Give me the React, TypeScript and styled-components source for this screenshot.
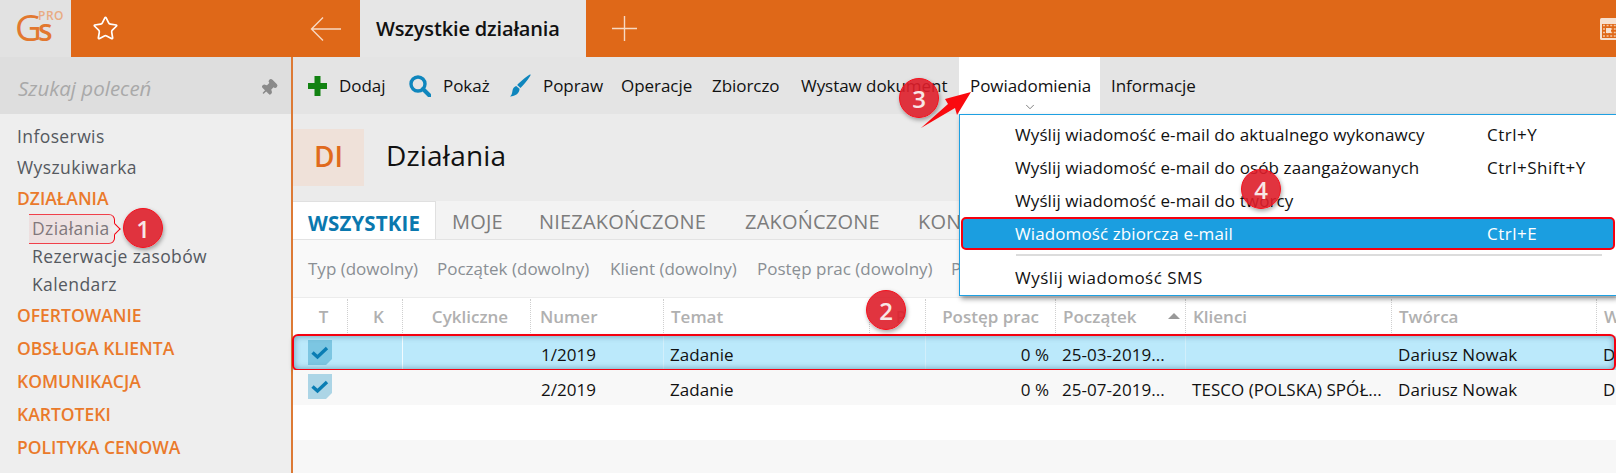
import React from "react"
import styled, { createGlobalStyle } from "styled-components"
import { Star, Pin, ChevronDown } from "lucide-react"

const GlobalStyle = createGlobalStyle`
  html, body {
    margin: 0;
    padding: 0;
    background: #fff;
    font-family: "Open Sans", "Noto Sans", sans-serif;
  }
  * { box-sizing: border-box; }
`

const columns = "54px 55px 128px 133px 206px 56px 130px 130px 206px 205px 1fr"
const orange = "#df6818"
const alertRed = "#f5000f"

const sideGroups = ["OFERTOWANIE", "OBSŁUGA KLIENTA", "KOMUNIKACJA", "KARTOTEKI", "POLITYKA CENOWA"]
const tabs = [
  { label: "MOJE", w: 87 },
  { label: "NIEZAKOŃCZONE", w: 206 },
  { label: "ZAKOŃCZONE", w: 173 },
  { label: "KONTYNUOWANE", w: 200 },
]
const filters = [
  { label: "Typ (dowolny)", w: 129 },
  { label: "Początek (dowolny)", w: 173 },
  { label: "Klient (dowolny)", w: 147 },
  { label: "Postęp prac (dowolny)", w: 194 },
  { label: "Priorytet (dowolny)", w: 170 },
]
const menu = [
  { label: "Wyślij wiadomość e-mail do aktualnego wykonawcy", keys: "Ctrl+Y" },
  { label: "Wyślij wiadomość e-mail do osób zaangażowanych", keys: "Ctrl+Shift+Y" },
  { label: "Wyślij wiadomość e-mail do twórcy", keys: "" },
]
const rows = [
  { num: "1/2019", date: "25-03-2019...", client: "", active: true },
  { num: "2/2019", date: "25-07-2019...", client: "TESCO (POLSKA) SPÓŁ...", active: false },
]

const CheckIcon = ({ fill }: { fill: string }) => (
  <svg width="24" height="25" viewBox="0 0 24 25">
    <path d="M0 0H24V19L18 25H0Z" fill={fill} />
    <path d="M4.5 12.5L9.5 17L19 8" fill="none" stroke="#0a7db3" strokeWidth="3.4" />
  </svg>
)

const App = () => (
  <Page>
    <GlobalStyle />
    <TopBar>
      <Logo>
        <LogoG>G</LogoG>
        <LogoS>s</LogoS>
        <LogoPro>PRO</LogoPro>
      </Logo>
      <StarSlot>
        <Star size={27} strokeWidth={1.5} color="#fff" />
      </StarSlot>
      <BackSlot>
        <svg width="32" height="26" viewBox="0 0 32 26" fill="none" stroke="#f7d9c3" strokeWidth="1.4">
          <path d="M31 13H1.5M13 1.5L1.5 13L13 24.5" />
        </svg>
      </BackSlot>
      <ActiveTab>Wszystkie działania</ActiveTab>
      <AddSlot>
        <svg width="25" height="25" viewBox="0 0 25 25" stroke="#f7d9c3" strokeWidth="1.4">
          <path d="M0 12.5H25M12.5 0V25" />
        </svg>
      </AddSlot>
      <CalendarSlot>
        <svg width="17" height="22" viewBox="0 0 17 22">
          <rect width="17" height="22" rx="1.5" fill="#f6e0cf" />
          <rect x="2" y="6" width="15" height="14" fill={orange} />
          <path d="M3 7.5H17M3 11H17M3 14.5H17M3 18H17" stroke="#f6c7a4" strokeWidth="1.6" strokeDasharray="2 1.6" />
          <rect x="6" y="10" width="5" height="5" fill="#f6e0cf" />
        </svg>
      </CalendarSlot>
    </TopBar>
    <Body>
      <Sidebar>
        <SearchBox>
          <SearchHint>Szukaj poleceń</SearchHint>
          <PinIcon>
            <Pin size={18} fill="#8a8a8a" color="#8a8a8a" />
          </PinIcon>
        </SearchBox>
        <SideList>
          <SideLink $h={32}>Infoserwis</SideLink>
          <SideLink $h={31}>Wyszukiwarka</SideLink>
          <SideGroup $h={31}>DZIAŁANIA</SideGroup>
          <SideLink $h={29} $sub>
            Działania
          </SideLink>
          <SideLink $h={26} $sub>
            Rezerwacje zasobów
          </SideLink>
          <SideLink $h={30} $sub>
            Kalendarz
          </SideLink>
          {sideGroups.map(group => (
            <SideGroup key={group} $h={33}>
              {group}
            </SideGroup>
          ))}
        </SideList>
      </Sidebar>
      <Main>
        <Toolbar>
          <ToolItem $w={101}>
            <svg width="19" height="20" viewBox="0 0 19 20" fill="#128212">
              <path d="M6.5 0H12.5V7H19V13H12.5V20H6.5V13H0V7H6.5Z" />
            </svg>
            <span>Dodaj</span>
          </ToolItem>
          <ToolItem $w={101}>
            <svg width="22" height="22" viewBox="0 0 22 22" fill="none" stroke="#0f86bd">
              <circle cx="9" cy="9" r="7" strokeWidth="3.4" />
              <path d="M14 14L20.5 20.5" strokeWidth="4" strokeLinecap="round" />
            </svg>
            <span>Pokaż</span>
          </ToolItem>
          <ToolItem $w={111}>
            <svg width="21" height="23" viewBox="0 0 22 24" fill="#0f86bd">
              <path d="M21.5 0.5C22.5 1.5 15 11 11 14.5L7.5 11.5C11 7.5 20.5 -0.5 21.5 0.5Z" />
              <path d="M6.5 12.5L10 15.5C10 20 6 23.5 0 23.5C2.5 22 2 19 3 16C3.7 14 5 13 6.5 12.5Z" />
            </svg>
            <span>Popraw</span>
          </ToolItem>
          <ToolItem $w={91}>Operacje</ToolItem>
          <ToolItem $w={89}>Zbiorczo</ToolItem>
          <ToolItem $w={158}>Wystaw dokument</ToolItem>
          <ToolItem $w={141} $open>
            Powiadomienia
            <Caret>
              <ChevronDown size={14} strokeWidth={1.4} color="#666" />
            </Caret>
            <Menu>
              {menu.map(item => (
                <MenuRow key={item.label}>
                  <span>{item.label}</span>
                  <span>{item.keys}</span>
                </MenuRow>
              ))}
              <MenuRow $active>
                <span>Wiadomość zbiorcza e-mail</span>
                <span>Ctrl+E</span>
              </MenuRow>
              <MenuRule />
              <MenuRow $h={38}>
                <span>Wyślij wiadomość SMS</span>
              </MenuRow>
            </Menu>
          </ToolItem>
          <ToolItem $w={116} $pad={11}>
            Informacje
          </ToolItem>
        </Toolbar>
        <TitleRow>
          <TitleBadge>DI</TitleBadge>
          <Title>Działania</Title>
        </TitleRow>
        <Tabs>
          <TabActive>WSZYSTKIE</TabActive>
          {tabs.map(tab => (
            <Tab key={tab.label} $w={tab.w}>
              {tab.label}
            </Tab>
          ))}
        </Tabs>
        <Filters>
          {filters.map(filter => (
            <Filter key={filter.label} $w={filter.w}>
              {filter.label}
            </Filter>
          ))}
        </Filters>
        <HeadRow>
          <HeadCell $center>T</HeadCell>
          <HeadCell $center>K</HeadCell>
          <HeadCell $center>Cykliczne</HeadCell>
          <HeadCell>Numer</HeadCell>
          <HeadCell>Temat</HeadCell>
          <HeadCell $center>P</HeadCell>
          <HeadCell $end>Postęp prac</HeadCell>
          <HeadCell>
            Początek
            <SortMark />
          </HeadCell>
          <HeadCell>Klienci</HeadCell>
          <HeadCell>Twórca</HeadCell>
          <HeadCell>W</HeadCell>
        </HeadRow>
        {rows.map(row => {
          const line = row.active ? "#d2effb" : "transparent"
          return (
            <DataRow key={row.num} $active={row.active}>
              <CheckCell>
                <CheckIcon fill={row.active ? "#7cc6e2" : "#acd5e6"} />
              </CheckCell>
              <Cell />
              <Cell $line={row.active ? "#f2fbff" : "transparent"} />
              <Cell>{row.num}</Cell>
              <Cell $line={line}>Zadanie</Cell>
              <Cell />
              <Cell $line={line} $right>
                0 %
              </Cell>
              <Cell>{row.date}</Cell>
              <Cell $line={line}>{row.client}</Cell>
              <Cell>Dariusz Nowak</Cell>
              <Cell>D</Cell>
            </DataRow>
          )
        })}
        <EmptyRow />
        <TableFoot />
      </Main>
    </Body>

    <Callout />
    <Badge $x={143} $y={228}>1</Badge>
    <Badge $x={886} $y={310}>2</Badge>
    <PointerArrow viewBox="0 0 60 50" width="60" height="50">
      <path d="M51 1L37 24L35 17L1 37L28 13L25 8Z" fill="#fa0a0f" />
    </PointerArrow>
    <Badge $x={919} $y={98}>3</Badge>
    <Badge $x={1261} $y={189}>4</Badge>
  </Page>
)

const Page = styled.div`
  position: relative;
  width: 1616px;
  height: 473px;
  overflow: hidden;
  font-size: 17px;
  color: #111;
`

const TopBar = styled.header`
  display: flex;
  height: 57px;
  background: ${orange};
`

const Logo = styled.div`
  position: relative;
  width: 71px;
  background: #e2e2e2;
`

const LogoG = styled.span`
  position: absolute;
  left: 15px;
  top: 2px;
  font-size: 37px;
  line-height: 50px;
  color: #e2782f;
`

const LogoS = styled.span`
  position: absolute;
  left: 38px;
  top: 10px;
  font-size: 30px;
  line-height: 40px;
  font-weight: 600;
  color: #e2782f;
`

const LogoPro = styled.span`
  position: absolute;
  left: 38px;
  top: 9px;
  font-size: 12px;
  line-height: 14px;
  font-weight: 600;
  letter-spacing: 0.5px;
  color: #e9ab82;
`

const StarSlot = styled.div`
  display: flex;
  align-items: center;
  width: 221px;
  padding-left: 21px;
`

const BackSlot = styled.div`
  display: flex;
  align-items: center;
  width: 68px;
  padding-left: 18px;
`

const ActiveTab = styled.div`
  display: flex;
  align-items: center;
  width: 226px;
  padding-left: 16px;
  background: #e6e6e6;
  font-size: 20px;
  font-weight: 600;
  letter-spacing: -0.15px;
  color: #111;
`

const AddSlot = styled.div`
  display: flex;
  align-items: center;
  flex: 1;
  padding-left: 26px;
`

const CalendarSlot = styled.div`
  display: flex;
  align-items: center;
  justify-content: flex-end;
  width: 16px;
  overflow: hidden;

  svg {
    flex-shrink: 0;
    margin-right: -1px;
  }
`

const Body = styled.div`
  display: flex;
  height: 416px;
`

const Sidebar = styled.aside`
  width: 293px;
  flex-shrink: 0;
  background: #eeeeee;
  border-right: 2px solid #dd7a35;
`

const SearchBox = styled.div`
  position: relative;
  display: flex;
  align-items: center;
  height: 57px;
  padding: 4px 0 0 18px;
  background: #dedede;
`

const SearchHint = styled.span`
  font-size: 20.5px;
  font-style: italic;
  color: #a9a9a9;
`

const PinIcon = styled.span`
  position: absolute;
  right: 15px;
  top: 21px;
  transform: rotate(45deg);
`

const SideList = styled.nav`
  display: flex;
  flex-direction: column;
  padding: 6px 0 0 17px;
  color: #55595f;
`

const SideLink = styled.div<{ $h: number; $sub?: boolean }>`
  height: ${p => p.$h}px;
  line-height: ${p => p.$h}px;
  padding-left: ${p => (p.$sub ? "15px" : "0")};
  font-size: 17.5px;
  letter-spacing: 0.4px;
`

const SideGroup = styled.div<{ $h: number }>`
  height: ${p => p.$h}px;
  line-height: ${p => p.$h}px;
  font-size: 17.5px;
  font-weight: 600;
  color: #ea7a2b;
`

const Main = styled.main`
  flex: 1;
  min-width: 0;
  display: flex;
  flex-direction: column;
  background: #fff;
`

const Toolbar = styled.div`
  display: flex;
  height: 57px;
  padding-left: 15px;
  background: #e4e4e4;
  letter-spacing: -0.05px;
`

const ToolItem = styled.div<{ $w: number; $open?: boolean; $pad?: number }>`
  position: relative;
  display: flex;
  align-items: center;
  gap: 12px;
  flex-shrink: 0;
  width: ${p => p.$w}px;
  padding-left: ${p => (p.$open ? 11 : p.$pad || 0)}px;
  background: ${p => (p.$open ? "#fff" : "transparent")};
`

const Caret = styled.span`
  position: absolute;
  left: 64px;
  bottom: 0;
  line-height: 0;
`

const Menu = styled.div`
  position: absolute;
  z-index: 2;
  top: 57px;
  left: 0;
  width: 657px;
  height: 182px;
  padding: 3px 0 0 1px;
  background: #fff;
  border: 1.5px solid #1ea0e2;
  border-right: 0;
  font-size: 17px;
  letter-spacing: 0.1px;
  box-shadow: 2px 3px 5px rgba(0, 0, 0, 0.4);
`

const MenuRow = styled.div<{ $active?: boolean; $h?: number }>`
  display: flex;
  align-items: center;
  height: ${p => p.$h || 33}px;
  padding-left: ${p => (p.$active ? "52px" : "54px")};
  margin-right: 1px;
  color: ${p => (p.$active ? "#fff" : "#111")};
  background: ${p => (p.$active ? "#1b9ee0" : "transparent")};
  border: ${p => (p.$active ? `2px solid ${alertRed}` : "0")};
  border-radius: ${p => (p.$active ? "5px" : "0")};

  span:first-child {
    width: 472px;
    flex-shrink: 0;
  }

  span:last-child {
    letter-spacing: 0.5px;
  }
`

const MenuRule = styled.div`
  height: 2px;
  margin: 4px 14px 2px 55px;
  background: #dcdcdc;
`

const TitleRow = styled.div`
  display: flex;
  align-items: center;
  gap: 22px;
  height: 87px;
  background: #ebebeb;
`

const TitleBadge = styled.div`
  display: flex;
  align-items: center;
  justify-content: center;
  width: 71px;
  height: 57px;
  padding-bottom: 3px;
  background: #efe1d9;
  font-size: 28px;
  font-weight: 600;
  color: #e06a1d;
`

const Title = styled.h1`
  margin: 0 0 5px;
  font-size: 28px;
  font-weight: 400;
  letter-spacing: 0.2px;
  color: #111;
`

const Tabs = styled.div`
  display: flex;
  height: 39px;
  background: #f3f3f3;
  border-bottom: 1px solid #e3e3e3;
  overflow: hidden;
`

const TabActive = styled.div`
  display: flex;
  align-items: center;
  width: 143px;
  height: 39px;
  padding: 3px 0 0 15px;
  background: #fff;
  border: 1px solid #e0e0e0;
  border-bottom: 0;
  border-left: 0;
  font-size: 20.5px;
  font-weight: 700;
  letter-spacing: 0.15px;
  color: #0a78ae;
`

const Tab = styled.div<{ $w: number }>`
  display: flex;
  align-items: center;
  flex-shrink: 0;
  width: ${p => p.$w}px;
  padding: 3px 0 0 16px;
  font-size: 20px;
  letter-spacing: 0.2px;
  white-space: nowrap;
  color: #7c7c7c;
`

const Filters = styled.div`
  display: flex;
  align-items: center;
  height: 58px;
  padding-left: 15px;
  background: #f9f9f9;
  border-bottom: 1px solid #ececec;
  color: #8a8f94;
`

const Filter = styled.div<{ $w: number }>`
  flex-shrink: 0;
  width: ${p => p.$w}px;
  white-space: nowrap;
`

const HeadRow = styled.div`
  display: grid;
  grid-template-columns: ${columns};
  height: 38px;
  padding-top: 1px;
  background: #fff;
`

const HeadCell = styled.div<{ $center?: boolean; $end?: boolean }>`
  position: relative;
  display: flex;
  align-items: center;
  justify-content: ${p => (p.$center ? "center" : p.$end ? "flex-end" : "flex-start")};
  height: 34px;
  padding: 0 ${p => (p.$end ? "16px" : "0")} 0 7px;
  font-weight: 600;
  white-space: nowrap;
  color: #b0b0b0;
  border-left: 1px dotted #cfcfcf;

  &:first-child {
    border-left: 0;
  }

  &:nth-child(4) {
    padding-left: 9px;
  }
`

const SortMark = styled.i`
  position: absolute;
  right: 5px;
  top: 14px;
  border: 6px solid transparent;
  border-top: 0;
  border-bottom: 6px solid #999;
`

const DataRow = styled.div<{ $active?: boolean }>`
  position: relative;
  display: grid;
  grid-template-columns: ${columns};
  height: ${p => (p.$active ? 34 : 35)}px;
  background: ${p => (p.$active ? "#bbe9fb" : "#f8f8f8")};

  ${p =>
    p.$active &&
    `
    &::after {
      content: "";
      position: absolute;
      inset: -2px 0 -1px -1px;
      border: 2px solid ${alertRed};
      border-radius: 6px;
      box-shadow: inset 0 0 6px rgba(0, 60, 90, 0.45), 0 2px 4px rgba(0, 0, 0, 0.15);
      pointer-events: none;
    }
  `}
`

const Cell = styled.div<{ $line?: string; $right?: boolean }>`
  display: flex;
  align-items: center;
  justify-content: ${p => (p.$right ? "flex-end" : "flex-start")};
  padding: 3px ${p => (p.$right ? "6px" : "0")} 0 6px;
  white-space: nowrap;
  overflow: hidden;
  letter-spacing: 0.05px;
  border-left: 1px solid ${p => p.$line || "transparent"};

  &:nth-child(4) {
    padding-left: 10px;
  }
`

const CheckCell = styled.div`
  padding: 4px 0 0 15px;
  line-height: 0;
`

const EmptyRow = styled.div`
  height: 35px;
  background: #fff;
`

const TableFoot = styled.div`
  flex: 1;
  background: #f7f7f7;
`

const Badge = styled.div<{ $x: number; $y: number }>`
  position: absolute;
  z-index: 5;
  left: ${p => p.$x - 20}px;
  top: ${p => p.$y - 20}px;
  display: flex;
  align-items: center;
  justify-content: center;
  width: 40px;
  height: 40px;
  border-radius: 50%;
  background: rgba(222, 30, 42, 0.9);
  border: 1.5px solid #f5101c;
  box-shadow: 1px 2px 4px rgba(0, 0, 0, 0.35);
  font-size: 24px;
  font-weight: 600;
  color: #f8e6e6;
`

const Callout = styled.div`
  position: absolute;
  z-index: 4;
  left: 29px;
  top: 214px;
  width: 86px;
  height: 30px;
  border-top: 1.5px solid #f0404a;
  border-bottom: 1.5px solid #f0404a;
  border-right: 1.5px solid ${alertRed};
  border-radius: 0 6px 6px 0;
  background: linear-gradient(90deg, rgba(235, 190, 190, 0.3), rgba(235, 205, 205, 0.25));

  &::after {
    content: "";
    position: absolute;
    right: -5px;
    top: 10px;
    width: 7px;
    height: 7px;
    transform: rotate(45deg);
    background: #eee;
    border-top: 1.5px solid ${alertRed};
    border-right: 1.5px solid ${alertRed};
  }
`

const PointerArrow = styled.svg`
  position: absolute;
  z-index: 4;
  left: 920px;
  top: 91px;
`

export default App
